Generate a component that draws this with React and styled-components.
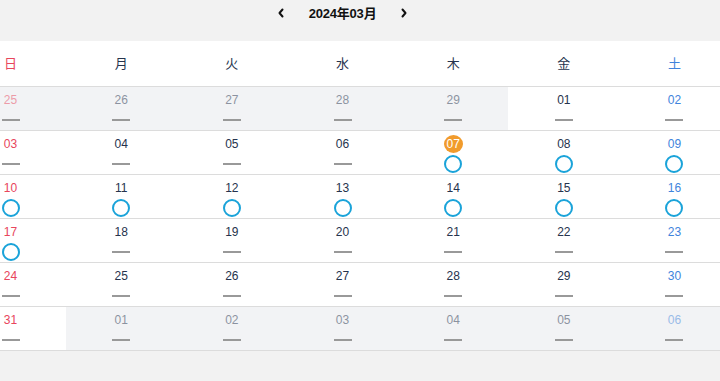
import React from "react";
import styled, { createGlobalStyle } from "styled-components";

const Global = createGlobalStyle`
  html, body { margin: 0; padding: 0; background: #f2f2f2; overflow: hidden; }
  body { font-family: "Liberation Sans", Arial, "Noto Sans CJK JP", sans-serif; }
`;

const COL = 110.67;

const Page = styled.div`
  width: ${COL * 7}px;
  margin-left: -44.8px;
`;

const TopBar = styled.div`
  height: 25px;
  margin-bottom: 16px;
  display: flex;
  align-items: center;
  justify-content: center;
  gap: 23px;
`;

const Title = styled.div`
  font-family: "Liberation Sans", Arial, "Noto Sans CJK JP", sans-serif;
  font-weight: bold;
  font-size: 13px;
  color: #111;
  letter-spacing: -0.2px;
`;

const NavBtn = styled.button`
  border: 0;
  background: none;
  padding: 0;
  width: 10px;
  height: 12px;
  display: flex;
  align-items: center;
  justify-content: center;
  cursor: pointer;
`;

const Grid = styled.div`
  display: grid;
  grid-template-columns: repeat(7, ${COL}px);
  background: #fff;
`;

const colorFor = (dow) =>
  dow === 0 ? "#e8455c" : dow === 6 ? "#3f84dc" : "#26334d";

const HeadCell = styled.div`
  height: 46px;
  padding-bottom: 3px;
  box-sizing: border-box;
  border-bottom: 1px solid #dcdcdc;
  display: flex;
  align-items: center;
  justify-content: center;
  font-family: "Noto Sans CJK JP", sans-serif;
  font-size: 13px;
  color: ${(p) => colorFor(p.$dow)};
`;

const DayCell = styled.div`
  height: 39px;
  padding-top: 4px;
  border-bottom: 1px solid #dcdcdc;
  background: ${(p) => (p.$other ? "#f2f3f5" : "#fff")};
  display: flex;
  flex-direction: column;
  align-items: center;
`;

const Num = styled.div`
  height: 18px;
  min-width: 18px;
  display: flex;
  align-items: center;
  justify-content: center;
  font-size: 12px;
  color: ${(p) => (p.$today ? "#fff" : colorFor(p.$dow))};
  opacity: ${(p) => (p.$other ? 0.5 : 1)};
  background: ${(p) => (p.$today ? "#f19b2c" : "transparent")};
  border-radius: 50%;
  ${(p) => (p.$today ? "width: 19px; height: 18px;" : "")}
`;

const Marker = styled.div`
  margin-top: 2px;
  height: 18px;
  display: flex;
  align-items: center;
  justify-content: center;
`;

const Dash = styled.span`
  display: block;
  width: 18px;
  height: 2px;
  background: #999;
`;

const Ring = styled.span`
  display: block;
  width: 14px;
  height: 14px;
  border: 2px solid #1aa3d9;
  border-radius: 50%;
`;

const WEEK = ["日", "月", "火", "水", "木", "金", "土"];

const pad = (n) => String(n).padStart(2, "0");

const circles = new Set([7, 8, 9, 10, 11, 12, 13, 14, 15, 16, 17]);

const days = [];
[25, 26, 27, 28, 29].forEach((d) => days.push({ d, other: true }));
for (let d = 1; d <= 31; d++) days.push({ d, other: false });
[1, 2, 3, 4, 5, 6].forEach((d) => days.push({ d, other: true }));

const Chevron = ({ dir }) => (
  <svg width="8" height="10" viewBox="0 0 8 10">
    <path
      d={dir === "left" ? "M5.5 1.5 L2.5 5 L5.5 8.5" : "M2.5 1.5 L5.5 5 L2.5 8.5"}
      fill="none"
      stroke="#111"
      strokeWidth="2"
      strokeLinecap="round"
      strokeLinejoin="round"
    />
  </svg>
);

export default function App() {
  return (
    <>
      <Global />
      <Page>
        <TopBar>
          <NavBtn aria-label="前月">
            <Chevron dir="left" />
          </NavBtn>
          <Title>2024年03月</Title>
          <NavBtn aria-label="翌月">
            <Chevron dir="right" />
          </NavBtn>
        </TopBar>
        <Grid>
          {WEEK.map((w, i) => (
            <HeadCell key={w} $dow={i}>
              {w}
            </HeadCell>
          ))}
          {days.map((x, i) => {
            const dow = i % 7;
            const today = !x.other && x.d === 7;
            const ring = !x.other && circles.has(x.d);
            return (
              <DayCell key={i} $other={x.other}>
                <Num $dow={dow} $other={x.other} $today={today}>
                  {pad(x.d)}
                </Num>
                <Marker>{ring ? <Ring /> : <Dash />}</Marker>
              </DayCell>
            );
          })}
        </Grid>
      </Page>
    </>
  );
}
